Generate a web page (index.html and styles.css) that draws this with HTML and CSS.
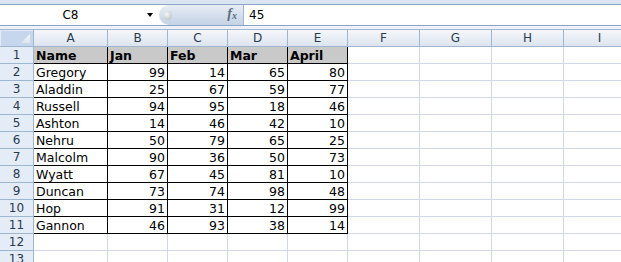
FILE: index.html
```html
<!DOCTYPE html>
<html lang="en">
<head>
  <meta charset="UTF-8" />
  <meta name="viewport" content="width=device-width, initial-scale=1.0"/>
  <title>Book1 - Sheet1</title>
  <link rel="stylesheet" href="styles.css">
</head>
<body>

  <div class="ribbon-edge"></div>

  <!-- Formula bar -->
  <div class="formula-bar">
    <div class="name-box">
      <span class="name-text">C8</span>
      <span class="drop-arrow"></span>
    </div>
    <div class="fx-pill">
      <span class="fx-knob"></span>
      <span class="fx-label">f<sub>x</sub></span>
    </div>
    <div class="formula-input">45</div>
  </div>

  <div class="sheet-gap"></div>

  <!-- Sheet -->
  <div class="sheet">
    <div class="corner"></div>
    <div class="col-head">A</div>
    <div class="col-head">B</div>
    <div class="col-head">C</div>
    <div class="col-head">D</div>
    <div class="col-head">E</div>
    <div class="col-head">F</div>
    <div class="col-head">G</div>
    <div class="col-head">H</div>
    <div class="col-head">I</div>

    <div class="row-head">1</div>
    <div class="cell boxed title">Name</div>
    <div class="cell boxed title">Jan</div>
    <div class="cell boxed title">Feb</div>
    <div class="cell boxed title">Mar</div>
    <div class="cell boxed title">April</div>
    <div class="cell"></div><div class="cell"></div><div class="cell"></div><div class="cell"></div>

    <div class="row-head">2</div>
    <div class="cell boxed">Gregory</div>
    <div class="cell boxed num">99</div>
    <div class="cell boxed num">14</div>
    <div class="cell boxed num">65</div>
    <div class="cell boxed num">80</div>
    <div class="cell"></div><div class="cell"></div><div class="cell"></div><div class="cell"></div>

    <div class="row-head">3</div>
    <div class="cell boxed">Aladdin</div>
    <div class="cell boxed num">25</div>
    <div class="cell boxed num">67</div>
    <div class="cell boxed num">59</div>
    <div class="cell boxed num">77</div>
    <div class="cell"></div><div class="cell"></div><div class="cell"></div><div class="cell"></div>

    <div class="row-head">4</div>
    <div class="cell boxed">Russell</div>
    <div class="cell boxed num">94</div>
    <div class="cell boxed num">95</div>
    <div class="cell boxed num">18</div>
    <div class="cell boxed num">46</div>
    <div class="cell"></div><div class="cell"></div><div class="cell"></div><div class="cell"></div>

    <div class="row-head">5</div>
    <div class="cell boxed">Ashton</div>
    <div class="cell boxed num">14</div>
    <div class="cell boxed num">46</div>
    <div class="cell boxed num">42</div>
    <div class="cell boxed num">10</div>
    <div class="cell"></div><div class="cell"></div><div class="cell"></div><div class="cell"></div>

    <div class="row-head">6</div>
    <div class="cell boxed">Nehru</div>
    <div class="cell boxed num">50</div>
    <div class="cell boxed num">79</div>
    <div class="cell boxed num">65</div>
    <div class="cell boxed num">25</div>
    <div class="cell"></div><div class="cell"></div><div class="cell"></div><div class="cell"></div>

    <div class="row-head">7</div>
    <div class="cell boxed">Malcolm</div>
    <div class="cell boxed num">90</div>
    <div class="cell boxed num">36</div>
    <div class="cell boxed num">50</div>
    <div class="cell boxed num">73</div>
    <div class="cell"></div><div class="cell"></div><div class="cell"></div><div class="cell"></div>

    <div class="row-head">8</div>
    <div class="cell boxed">Wyatt</div>
    <div class="cell boxed num">67</div>
    <div class="cell boxed num">45</div>
    <div class="cell boxed num">81</div>
    <div class="cell boxed num">10</div>
    <div class="cell"></div><div class="cell"></div><div class="cell"></div><div class="cell"></div>

    <div class="row-head">9</div>
    <div class="cell boxed">Duncan</div>
    <div class="cell boxed num">73</div>
    <div class="cell boxed num">74</div>
    <div class="cell boxed num">98</div>
    <div class="cell boxed num">48</div>
    <div class="cell"></div><div class="cell"></div><div class="cell"></div><div class="cell"></div>

    <div class="row-head">10</div>
    <div class="cell boxed">Hop</div>
    <div class="cell boxed num">91</div>
    <div class="cell boxed num">31</div>
    <div class="cell boxed num">12</div>
    <div class="cell boxed num">99</div>
    <div class="cell"></div><div class="cell"></div><div class="cell"></div><div class="cell"></div>

    <div class="row-head">11</div>
    <div class="cell boxed">Gannon</div>
    <div class="cell boxed num">46</div>
    <div class="cell boxed num">93</div>
    <div class="cell boxed num">38</div>
    <div class="cell boxed num">14</div>
    <div class="cell"></div><div class="cell"></div><div class="cell"></div><div class="cell"></div>

    <div class="row-head">12</div>
    <div class="cell"></div><div class="cell"></div><div class="cell"></div>
    <div class="cell"></div><div class="cell"></div><div class="cell"></div>
    <div class="cell"></div><div class="cell"></div><div class="cell"></div>

    <div class="row-head">13</div>
    <div class="cell"></div><div class="cell"></div><div class="cell"></div>
    <div class="cell"></div><div class="cell"></div><div class="cell"></div>
    <div class="cell"></div><div class="cell"></div><div class="cell"></div>
  </div>

</body>
</html>
```

FILE: styles.css
```css
body {
  margin: 0;
  width: 621px;
  height: 262px;
  overflow: hidden;
  background: #ffffff;
  font-family: 'DejaVu Sans', sans-serif;
  color: #000;
}

.ribbon-edge {
  height: 4px;
  background: #dbe5f2;
}

/* formula bar */
.formula-bar {
  display: flex;
  height: 20px;
  border-top: 1px solid #8ca5c4;
  border-bottom: 1px solid #8ca5c4;
  background: #ffffff;
  font-size: 12px;
  line-height: 20px;
}

.name-box {
  display: flex;
  align-items: center;
  width: 156px;
}

.name-text {
  flex: 1;
  text-align: center;
  padding-right: 6px;
}

.drop-arrow {
  width: 0;
  height: 0;
  margin-right: 3px;
  border-left: 3.5px solid transparent;
  border-right: 3.5px solid transparent;
  border-top: 4px solid #000;
}

.fx-pill {
  display: flex;
  align-items: center;
  justify-content: space-between;
  width: 85px;
  margin-left: 3px;
  padding: 0 6px 0 4px;
  box-sizing: border-box;
  border-radius: 10px 0 0 10px;
  border-right: 1px solid #a3b6ce;
  background: linear-gradient(#e8eef5, #d2dded 55%, #c5d3e5);
}

.fx-knob {
  width: 9px;
  height: 9px;
  border-radius: 50%;
  background: radial-gradient(circle at 40% 35%, #f6f6f6, #cdd1d6 60%, #a3aab2);
}

.fx-label {
  font-family: 'Liberation Serif', serif;
  font-style: italic;
  font-weight: bold;
  font-size: 14px;
  color: #5d6d7e;
}

.fx-label sub {
  font-size: 10px;
  vertical-align: -1px;
}

.formula-input {
  flex: 1;
  padding-left: 5px;
}

.sheet-gap {
  height: 3px;
  background: #eef2f8;
}

/* grid */
.sheet {
  display: grid;
  grid-template-columns: 34px 74px repeat(4, 60px) repeat(4, 72px);
  grid-template-rows: 18px;
  grid-auto-rows: 17px;
  font-size: 12.5px;
}

.sheet > div {
  box-sizing: border-box;
  border-right: 1px solid #d0d7e5;
  border-bottom: 1px solid #d0d7e5;
  overflow: hidden;
  white-space: nowrap;
}

.corner,
.col-head {
  border-top: 1px solid #9eb6ce;
}

.sheet > .corner {
  position: relative;
  background: #c6d7ed;
  border-right-color: #9eb6ce;
  border-bottom-color: #9eb6ce;
  box-shadow: inset 1px 1px 0 #e3ebf6;
}

.corner::after {
  content: "";
  position: absolute;
  right: 3px;
  bottom: 3px;
  width: 9px;
  height: 9px;
  background: linear-gradient(#f2f5fa, #dfe6f0);
  clip-path: polygon(100% 0, 100% 100%, 0 100%);
}

.sheet > .col-head {
  background: linear-gradient(#f5f7fb, #e9eef5 50%, #dde4ee);
  border-right-color: #9eb6ce;
  border-bottom-color: #9eb6ce;
  text-align: center;
  font-size: 12px;
  line-height: 16px;
  color: #2a3a50;
}

.sheet > .row-head {
  background: #e4ecf7;
  border-right-color: #9eb6ce;
  border-bottom-color: #9eb6ce;
  text-align: center;
  font-size: 12px;
  padding-top: 1px;
  line-height: 15px;
  color: #2a3a50;
}

.cell {
  padding: 1px 2px 0;
  line-height: 15px;
}

.sheet > .boxed {
  border-right-color: #000;
  border-bottom-color: #000;
}

.title {
  background: #c9c9c9;
  font-weight: bold;
}

.num {
  text-align: right;
}
```
